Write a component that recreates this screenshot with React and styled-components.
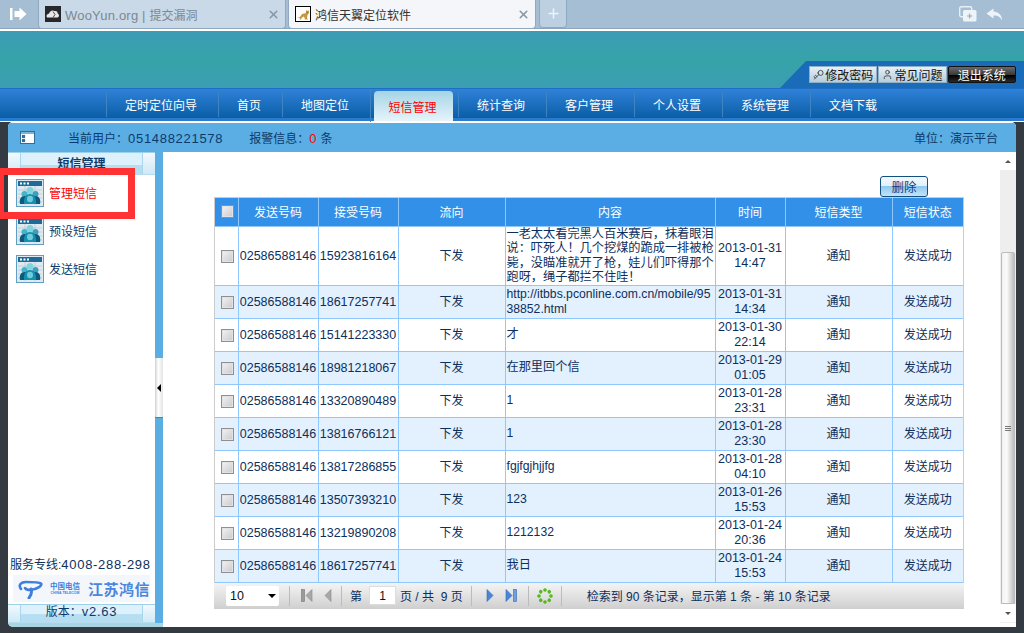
import React from 'react'
import styled, { createGlobalStyle } from 'styled-components'
import { Key, User, X, Plus } from 'lucide-react'

const GlobalStyle = createGlobalStyle`
  html, body { margin: 0; padding: 0; height: 100%; overflow: hidden; }
  #root { height: 100%; }
  * { box-sizing: border-box; }
  body { font-family: "Liberation Sans", "Noto Sans CJK SC", sans-serif; font-size: 12px; color: #0d2f5c; }
`

const Page = styled.div`
  position: relative;
  display: flex;
  flex-direction: column;
  height: 633px;
  width: 1024px;
  background: #fff;
`

/* browser chrome */
const TabBar = styled.div`
  display: flex;
  align-items: stretch;
  height: 29px;
  flex: none;
  padding-right: 21px;
  background: #a5bed3;
  border-bottom: 1px solid #8aa5bd;
`
const BackBtn = styled.div`
  width: 38px;
  display: flex;
  align-items: center;
  padding-left: 10px;
`
const Tab = styled.div`
  width: 248px;
  margin-right: 2px;
  margin-bottom: -1px;
  display: flex;
  align-items: center;
  padding: 0 5px 0 6px;
  gap: 4px;
  font-size: 12px;
  color: ${p => (p.$active ? '#333' : '#7b8894')};
  background: ${p => (p.$active ? '#f4f6f9' : '#c9d9e7')};
  border: 1px solid #8fa9c0;
  border-top: none;
  border-radius: 0 0 4px 4px;
`
const TabTitle = styled.span`
  flex: 1;
  white-space: nowrap;
`
const TabLatin = styled.span`
  font-size: 13px;
  letter-spacing: 0.2px;
`
const NewTab = styled.div`
  width: 28px;
  margin-left: 1px;
  display: flex;
  align-items: center;
  justify-content: center;
  background: #bcd0e1;
  border: 1px solid #8fa9c0;
  border-top: none;
  border-radius: 0 0 4px 4px;
  color: #eef3f7;
`
const ChromeTools = styled.div`
  margin-left: auto;
  display: flex;
  align-items: center;
  gap: 9px;
`
const WhiteLine = styled.div`
  height: 2px;
  flex: none;
  background: #fff;
`

/* banner */
const Banner = styled.div`
  height: 57px;
  flex: none;
  display: flex;
  justify-content: flex-end;
  align-items: flex-end;
  background: linear-gradient(180deg, #3c9bb5 0%, #36a3a8 50%, #3b9db3 100%);
`
const UserBar = styled.div`
  width: 244px;
  height: 27px;
  padding: 5px 8px 0 29px;
  display: flex;
  align-items: flex-start;
  gap: 1px;
  background: #1a6cb8;
  clip-path: polygon(26px 0, 100% 0, 100% 100%, 0 100%);
`
const UserBtn = styled.div`
  height: 17px;
  flex: 1;
  display: flex;
  align-items: center;
  justify-content: center;
  gap: 1px;
  font-size: 12px;
  color: ${p => (p.$dark ? '#fff' : '#111')};
  background: ${p =>
    p.$dark
      ? 'linear-gradient(180deg, #6a6a6a 0%, #3a3a3a 50%, #000 55%, #2a2a2a 100%)'
      : 'linear-gradient(180deg, #e6f0f6 0%, #b4cddd 100%)'};
  border: 1px solid ${p => (p.$dark ? '#111' : '#8fb0c8')};
  border-radius: ${p => (p.$dark ? '2px' : '0')};
`
const KeyIcon = styled(Key)`
  transform: rotate(180deg);
`

/* main nav */
const Nav = styled.div`
  height: 34px;
  flex: none;
  display: flex;
  padding-left: 106px;
  background: linear-gradient(180deg, #2f82d8 0%, #0a5ea6 88%, #2a7bd0 89%, #2a7bd0 97%, #fff 97%);
  border-top: 1px solid #1e6fc4;
`
const NavItem = styled.div`
  width: ${p => p.$w}px;
  height: 25px;
  margin-top: 3px;
  padding-right: 3px;
  display: flex;
  align-items: center;
  justify-content: center;
  color: #fff;
  font-size: 12px;
  border-left: 1px solid #3f84c2;
`
const NavActive = styled.div`
  width: 88px;
  padding: 2px 5px 0 3px;
  display: flex;
  border-left: 1px solid #3f84c2;
`
const NavActiveInner = styled.div`
  flex: 1;
  height: 30px;
  padding-right: 2px;
  display: flex;
  align-items: center;
  justify-content: center;
  color: #f00;
  font-size: 12px;
  border-radius: 4px 4px 0 0;
  background: linear-gradient(180deg, #a5d4e6 0%, #e6f4fa 100%);
`

/* workspace */
const Workspace = styled.div`
  flex: 1;
  min-height: 0;
  display: flex;
  padding: 0 8px 6px;
  background: #343a42;
`
const Panel = styled.div`
  flex: 1;
  display: flex;
  flex-direction: column;
  border-radius: 5px 5px 0 5px;
  overflow: hidden;
  background: #fff;
`
const InfoBar = styled.div`
  height: 30px;
  flex: none;
  display: flex;
  align-items: center;
  padding: 0 18px 0 12px;
  background: #5aaee3;
  border-top: 1px solid #fff;
  color: #0d3a6b;
  font-size: 12px;
`
const InfoText = styled.span`
  margin-left: ${p => p.$ml || 0}px;
  white-space: nowrap;
`
const InfoRight = styled(InfoText)`
  margin-left: auto;
`
const Digits = styled.span`
  font-size: 13px;
  letter-spacing: 0.7px;
`
const Red = styled(Digits)`
  color: #f00;
`
const Body = styled.div`
  flex: 1;
  min-height: 0;
  display: flex;
`
const BottomStrip = styled.div`
  height: 4px;
  width: 155px;
  flex: none;
  background: #aad5e3;
`

/* sidebar */
const Sidebar = styled.div`
  width: 147px;
  flex: none;
  display: flex;
  flex-direction: column;
`
const BarRow = styled.div`
  height: ${p => p.$h}px;
  flex: none;
  display: flex;
  border-top: 1px solid #9fd0ea;
  border-bottom: 1px solid #b5dcef;
`
const BarCap = styled.div`
  width: 12px;
  flex: none;
  background: linear-gradient(180deg, #f2f9fd 0%, #cfe9f6 100%);
`
const BarMid = styled.div`
  flex: 1;
  display: flex;
  justify-content: center;
  align-items: baseline;
  white-space: nowrap;
  padding-top: ${p => p.$pt || 0}px;
  font-size: 12px;
  line-height: 14px;
  font-weight: ${p => (p.$bold ? 700 : 400)};
  color: #0d3a6b;
  border-left: 1px solid #a9d6ec;
  border-right: 1px solid #a9d6ec;
  background: linear-gradient(180deg, #dcf1fb 0%, #dcf1fb 55%, #b5def1 56%, #b5def1 100%);
`
const Menu = styled.div`
  flex: 1;
  padding: 4px 0 0 8px;
`
const MenuItem = styled.div`
  height: 38px;
  display: flex;
  gap: 5px;
  align-items: flex-start;
`
const MenuLabel = styled.span`
  margin-top: 5px;
  font-size: 12px;
  color: ${p => (p.$active ? '#f00' : '#0d3a6b')};
`
const Hotline = styled.div`
  padding-left: 2px;
  font-size: 12px;
  line-height: 14px;
  white-space: nowrap;
  color: #0d2f5c;
`
const LogoBox = styled.div`
  margin: 3px 5px 2px;
  height: 27px;
  display: flex;
  align-items: center;
  padding-left: 4px;
  background: #f3f7fc;
`
const LogoCn = styled.div`
  width: 30px;
  margin: 0 8px 0 7px;
  flex: none;
  display: flex;
  flex-direction: column;
  align-items: center;
  white-space: nowrap;
  font-family: "Noto Sans CJK SC", sans-serif;
  font-weight: 700;
  font-size: 7.5px;
  line-height: 10px;
  color: #3f7fdc;
`
const LogoEn = styled.span`
  font-family: "Liberation Sans", sans-serif;
  font-size: 3.5px;
  line-height: 5px;
`
const LogoName = styled.span`
  font-family: "Noto Sans CJK SC", sans-serif;
  font-weight: 700;
  font-size: 15px;
  letter-spacing: 0.5px;
  white-space: nowrap;
  color: #4a86dd;
`

/* splitter */
const Splitter = styled.div`
  width: 8px;
  flex: none;
  display: flex;
  align-items: flex-start;
  padding-top: 206px;
  background: #5aaee3;
`
const SplitHandle = styled.div`
  width: 8px;
  height: 60px;
  display: flex;
  align-items: center;
  justify-content: center;
  background: linear-gradient(90deg, #d0d0d0 0%, #fff 40%, #e4e4e4 100%);
  border-bottom: 1px solid #777;
`
const SplitArrow = styled.div`
  width: 0;
  height: 0;
  border-style: solid;
  border-width: 4px 4px 4px 0;
  border-color: transparent #000 transparent transparent;
`

/* content */
const Content = styled.div`
  flex: 1;
  min-width: 0;
  padding: 24px 0 0 51px;
`
const DeleteRow = styled.div`
  width: 750px;
  display: flex;
  justify-content: flex-end;
  padding-right: 36px;
`
const DeleteBtn = styled.button`
  width: 48px;
  height: 21px;
  padding: 0;
  font-family: inherit;
  font-size: 12.5px;
  color: #0b3c8c;
  border: 1px solid #14507f;
  border-radius: 3px;
  background: linear-gradient(180deg, #f1f8fc 0%, #e2f0f9 48%, #8fc8ee 50%, #c5e4f7 100%);
`
const TableWrap = styled.div`
  width: 750px;
  border: 1px solid #ccc;
  border-bottom: none;
`
const Table = styled.table`
  width: 748px;
  table-layout: fixed;
  border-collapse: collapse;
`
const Th = styled.th`
  height: 28px;
  padding: 0;
  font-weight: 400;
  font-size: 12px;
  color: #fff;
  background: #3390e8;
  border: 1px solid #8fc7ff;
  border-top: none;
  &:first-child { border-left: none; }
  &:last-child { border-right: none; }
`
const Tr = styled.tr`
  background: ${p => (p.$alt ? '#e3f0fd' : '#fff')};
`
const Td = styled.td`
  height: ${p => p.$h || 33}px;
  padding: 1px 0 0;
  text-align: center;
  font-size: 12.5px;
  line-height: 15px;
  color: #0d2f5c;
  border: 1px solid #8fc7ff;
  &:first-child { border-left: none; }
  &:last-child { border-right: none; }
`
const TextTd = styled(Td)`
  padding: 0 0 0 1px;
  text-align: left;
  font-size: 12.2px;
  line-height: ${p => (p.$tight ? 14.5 : 15)}px;
  word-break: break-all;
`
const Cjk = styled.span`
  font-size: 12px;
`
const CheckBox = styled.div`
  width: 13px;
  height: 13px;
  margin-left: 6px;
  border: 1px solid #909090;
  box-shadow: inset 0 0 0 1px #e2e2e2;
  background: linear-gradient(135deg, #f4f4f4 0%, #c8c8d0 100%);
`

/* pager */
const Pager = styled.div`
  width: 750px;
  height: 26px;
  display: flex;
  align-items: center;
  padding-left: 12px;
  font-size: 12px;
  color: #0d2f5c;
  background: linear-gradient(180deg, #f4f4f4 0%, #cfcfcf 100%);
`
const PageSelect = styled.div`
  width: 53px;
  height: 20px;
  display: flex;
  align-items: center;
  justify-content: space-between;
  padding: 0 1px 0 4px;
  margin-right: 10px;
  font-size: 12.5px;
  color: #111;
  background: #fff;
  border-radius: 2px;
`
const SelectArrow = styled.span`
  width: 0;
  height: 0;
  margin-right: 2px;
  border-style: solid;
  border-width: 4px 4px 0;
  border-color: #000 transparent transparent;
`
const PagerSep = styled.span`
  width: 1px;
  height: 20px;
  flex: none;
  margin: ${p => p.$m || '0 9px'};
  background: #f8f8f8;
  border-left: 1px solid #bbb;
`
const PagerIcon = styled.span`
  display: flex;
  margin-right: ${p => p.$mr || 0}px;
`
const PageInput = styled.div`
  width: 27px;
  height: 19px;
  margin: 0 4px 0 7px;
  display: flex;
  align-items: center;
  justify-content: center;
  color: #111;
  background: #fff;
  border: 1px solid #ddd;
`
const PagerText = styled.span`
  white-space: nowrap;
  margin-left: ${p => p.$ml || 0}px;
`

/* scrollbar */
const ScrollTrack = styled.div`
  width: 16px;
  flex: none;
  display: flex;
  flex-direction: column;
  background: #eee;
`
const ScrollBtn = styled.div`
  height: ${p => p.$h}px;
  flex: none;
  display: flex;
  align-items: center;
  justify-content: center;
  background: #fff;
`
const ScrollArrow = styled.span`
  width: 0;
  height: 0;
  border-style: solid;
  border-color: #555 transparent;
  border-width: ${p => (p.$up ? '0 3px 3px' : '3px 3px 0')};
`
const ScrollGap = styled.div`
  height: 82px;
  flex: none;
`
const ScrollThumb = styled.div`
  height: 352px;
  flex: none;
  margin: 0 1px;
  display: flex;
  flex-direction: column;
  align-items: center;
  justify-content: center;
  gap: 1px;
  border: 1px solid #bbb;
  border-radius: 2px 2px 0 0;
  background: linear-gradient(90deg, #f2f2f2 0%, #fafafa 40%, #bdbdbd 100%);
`
const Grip = styled.i`
  width: 6px;
  height: 1px;
  background: #777;
`

/* annotation drawn on the screenshot */
const RedMark = styled.div`
  position: absolute;
  left: 0;
  top: 168px;
  width: 135px;
  height: 51px;
  border: 7px solid #ff3333;
  border-left-width: 4px;
`

const TableIcon = () => (
  <svg width="28" height="28" viewBox="0 0 28 28" style={{ flex: 'none' }}>
    <rect x="0.5" y="0.5" width="27" height="27" fill="#dfe9f0" stroke="#5f9fc6" />
    <rect x="2" y="2" width="24" height="5" fill="#1f6a98" />
    <rect x="4" y="3.5" width="2" height="2" fill="#fff" />
    <rect x="7.5" y="3.5" width="2" height="2" fill="#fff" />
    <rect x="11" y="3.5" width="2" height="2" fill="#fff" />
    <path d="M2 11h24M2 15h24M2 19h24M2 23h24M9 7v19M19 7v19" stroke="#b4c8d6" strokeWidth="0.7" />
    <circle cx="8.500" cy="15" r="3" fill="#46b4c8" />
    <circle cx="19.500" cy="15" r="3" fill="#3aa0bc" />
    <circle cx="14" cy="11.500" r="3.500" fill="#7fd4e0" />
    <path d="M4 25c-1-5 1-8 4.500-8S13 20 13 25z" fill="#0e5a7c" />
    <path d="M15 25c0-5 1-8 4.500-8s5.500 3 4.500 8z" fill="#0e5a7c" />
    <path d="M8 25c-.5-7 2-10 6-10s6.500 3 6 10z" fill="#1590ae" />
    <ellipse cx="14" cy="20" rx="3" ry="3.200" fill="#8fe0ea" opacity="0.75" />
  </svg>
)

const BackIcon = () => (
  <svg width="17" height="14" viewBox="0 0 17 14">
    <rect x="0" y="1" width="2.5" height="12" fill="#fff" />
    <path d="M4.5 4h5V0.5L16.5 7l-7 6.5V10h-5z" fill="#fff" />
  </svg>
)

const WindowIcon = () => (
  <svg width="18" height="16" viewBox="0 0 18 16">
    <rect x="0.7" y="0.7" width="12" height="10" rx="1.5" fill="none" stroke="#e8eff5" strokeWidth="1.4" />
    <rect x="4" y="4" width="13.5" height="11.5" rx="1.5" fill="#eef3f7" />
    <path d="M10.7 7.5v5M8.2 10h5" stroke="#8fa5b8" strokeWidth="1" />
  </svg>
)

const ReplyIcon = () => (
  <svg width="17" height="13" viewBox="0 0 17 13">
    <path d="M7.5 0.5L0.5 5.5l7 5V7.5c4 0 6.5 1 8.5 5 0-5-3-8.5-8.5-9z" fill="#eef3f7" />
  </svg>
)

const CloudFav = () => (
  <svg width="16" height="16" viewBox="0 0 16 16" style={{ flex: 'none' }}>
    <rect width="16" height="16" fill="#26282c" />
    <path d="M2 11.500c-1.200-2 .2-3.800 2-3.800C4.500 5 7.500 3.500 9.500 5c2-.5 3.500 1 3.200 2.700 1.500.3 2 3-.2 3.800z" fill="#e8e8e8" />
    <path d="M8 5.500l2 3-2 3" fill="none" stroke="#26282c" strokeWidth="0.8" />
  </svg>
)

const CatFav = () => (
  <svg width="16" height="16" viewBox="0 0 16 16" style={{ flex: 'none' }}>
    <rect x="0.5" y="0.5" width="15" height="15" fill="#fff" stroke="#000" />
    <path d="M2 12l3-1 2-3 4-1 .5-3 1 1 1-1 .5 3-1.500 2-.5 3 1 1.500H10l-1-3-2 1-1 2H4.500l.5-1.500z" fill="#c9953f" />
    <circle cx="12" cy="6" r="0.6" fill="#333" />
  </svg>
)

const TelecomMark = () => (
  <svg width="26" height="20" viewBox="0 0 26 20" style={{ flex: 'none' }}>
    <path
      d="M4 10C1 6 4 3 9 3c6 0 13 0 15 1.500 1.500 1.500-3 6-11 6.500-2 0-4-.5-5-2"
      fill="none"
      stroke="#3f7fdc"
      strokeWidth="2.600"
      strokeLinecap="round"
    />
    <path d="M14 10c1 3 .5 6-2 9" fill="none" stroke="#3f7fdc" strokeWidth="3" strokeLinecap="round" />
  </svg>
)

const FirstIcon = () => (
  <svg width="12" height="13" viewBox="0 0 12 13">
    <rect x="0.5" y="0.5" width="3" height="12" fill="#9a9a9a" stroke="#777" strokeWidth="0.6" />
    <path d="M11 0.500v12L5 6.500z" fill="#a8a8a8" stroke="#888" strokeWidth="0.6" />
  </svg>
)
const PrevIcon = () => (
  <svg width="8" height="13" viewBox="0 0 8 13">
    <path d="M7 0.500v12L1 6.500z" fill="#a8a8a8" stroke="#888" strokeWidth="0.6" />
  </svg>
)
const NextIcon = () => (
  <svg width="8" height="13" viewBox="0 0 8 13">
    <path d="M1 0.500v12L7 6.500z" fill="#4a86d8" stroke="#3468b0" strokeWidth="0.6" />
  </svg>
)
const LastIcon = () => (
  <svg width="12" height="13" viewBox="0 0 12 13">
    <path d="M1 0.500v12L7 6.500z" fill="#4a86d8" stroke="#3468b0" strokeWidth="0.6" />
    <rect x="8.500" y="0.500" width="3" height="12" fill="#6f9fe0" stroke="#3468b0" strokeWidth="0.6" />
  </svg>
)
const RefreshIcon = () => (
  <svg width="16" height="16" viewBox="0 0 16 16">
    {[0, 45, 90, 135, 180, 225, 270, 315].map(a => (
      <circle key={a} cx="8" cy="2" r="1.800" fill="#55b81e" transform={`rotate(${a} 8 8)`} />
    ))}
  </svg>
)

const navItems = [
  { t: '定时定位向导', w: 112 },
  { t: '首页', w: 64 },
  { t: '地图定位', w: 88 },
  { t: '短信管理', w: 88, active: true },
  { t: '统计查询', w: 88 },
  { t: '客户管理', w: 88 },
  { t: '个人设置', w: 88 },
  { t: '系统管理', w: 88 },
  { t: '文档下载', w: 88 },
]

const columns = [23, 80, 80, 107, 210, 70, 107, 71]
const heads = ['发送号码', '接受号码', '流向', '内容', '时间', '短信类型', '短信状态']

const rows = [
  { to: '15923816164', text: '一老太太看完黑人百米赛后，抹着眼泪说：吓死人！几个挖煤的跪成一排被枪毙，没瞄准就开了枪，娃儿们吓得那个跑呀，绳子都拦不住哇！', d: '2013-01-31', t: '14:47', h: 59 },
  { to: '18617257741', text: 'http://itbbs.pconline.com.cn/mobile/9538852.html', d: '2013-01-31', t: '14:34' },
  { to: '15141223330', text: '才', d: '2013-01-30', t: '22:14' },
  { to: '18981218067', text: '在那里回个信', d: '2013-01-29', t: '01:05' },
  { to: '13320890489', text: '1', d: '2013-01-28', t: '23:31' },
  { to: '13816766121', text: '1', d: '2013-01-28', t: '23:30' },
  { to: '13817286855', text: 'fgjfgjhjjfg', d: '2013-01-28', t: '04:10' },
  { to: '13507393210', text: '123', d: '2013-01-26', t: '15:53' },
  { to: '13219890208', text: '1212132', d: '2013-01-24', t: '20:36' },
  { to: '18617257741', text: '我日', d: '2013-01-24', t: '15:53' },
]

const menu = ['管理短信', '预设短信', '发送短信']

const App = () => {
  return (
    <Page>
      <GlobalStyle />
      <TabBar>
        <BackBtn><BackIcon /></BackBtn>
        <Tab>
          <CloudFav />
          <TabTitle><TabLatin>WooYun.org | </TabLatin>提交漏洞</TabTitle>
          <X size={13} strokeWidth={3} color="#8a98a6" />
        </Tab>
        <Tab $active>
          <CatFav />
          <TabTitle>鸿信天翼定位软件</TabTitle>
          <X size={13} strokeWidth={3} color="#8a98a6" />
        </Tab>
        <NewTab><Plus size={15} strokeWidth={2.5} /></NewTab>
        <ChromeTools>
          <WindowIcon />
          <ReplyIcon />
        </ChromeTools>
      </TabBar>
      <WhiteLine />
      <Banner>
        <UserBar>
          <UserBtn><KeyIcon size={11} color="#444" />修改密码</UserBtn>
          <UserBtn><User size={11} color="#444" />常见问题</UserBtn>
          <UserBtn $dark>退出系统</UserBtn>
        </UserBar>
      </Banner>
      <Nav>
        {navItems.map(n =>
          n.active ? (
            <NavActive key={n.t}><NavActiveInner>{n.t}</NavActiveInner></NavActive>
          ) : (
            <NavItem key={n.t} $w={n.w}>{n.t}</NavItem>
          )
        )}
      </Nav>
      <Workspace>
        <Panel>
          <InfoBar>
            <svg width="15" height="13" viewBox="0 0 15 13" style={{ flex: 'none' }}>
              <rect x="0.5" y="0.5" width="14" height="12" fill="#e8f3fa" stroke="#2f6f99" />
              <rect x="1" y="1" width="13" height="2" fill="#7fb2d2" />
              <rect x="2" y="4" width="3" height="3" fill="#2f6f99" />
              <rect x="2" y="8" width="3" height="3" fill="#2f6f99" />
              <rect x="6" y="3" width="8" height="9" fill="#fff" />
            </svg>
            <InfoText $ml={33}>当前用户：<Digits>051488221578</Digits></InfoText>
            <InfoText $ml={26}>报警信息：<Red>0</Red> 条</InfoText>
            <InfoRight>单位：演示平台</InfoRight>
          </InfoBar>
          <Body>
            <Sidebar>
              <BarRow $h={23}>
                <BarCap />
                <BarMid $bold $pt={4}>短信管理</BarMid>
                <BarCap />
              </BarRow>
              <Menu>
                {menu.map((m, i) => (
                  <MenuItem key={m}>
                    <TableIcon />
                    <MenuLabel $active={i === 0}>{m}</MenuLabel>
                  </MenuItem>
                ))}
              </Menu>
              <Hotline>服务专线:<Digits>4008-288-298</Digits></Hotline>
              <LogoBox>
                <TelecomMark />
                <LogoCn>
                  中国电信
                  <LogoEn>CHINA TELECOM</LogoEn>
                </LogoCn>
                <LogoName>江苏鸿信</LogoName>
              </LogoBox>
              <BarRow $h={19}>
                <BarCap />
                <BarMid>版本：<Digits>v2.63</Digits></BarMid>
                <BarCap />
              </BarRow>
            </Sidebar>
            <Splitter>
              <SplitHandle><SplitArrow /></SplitHandle>
            </Splitter>
            <Content>
              <DeleteRow><DeleteBtn>删除</DeleteBtn></DeleteRow>
              <TableWrap>
                <Table>
                  <colgroup>
                    {columns.map((w, i) => <col key={i} width={w} />)}
                  </colgroup>
                  <thead>
                    <tr>
                      <Th><CheckBox /></Th>
                      {heads.map(h => <Th key={h}>{h}</Th>)}
                    </tr>
                  </thead>
                  <tbody>
                    {rows.map((r, i) => (
                      <Tr key={i} $alt={i % 2 === 1}>
                        <Td $h={r.h}><CheckBox /></Td>
                        <Td>02586588146</Td>
                        <Td>{r.to}</Td>
                        <Td><Cjk>下发</Cjk></Td>
                        <TextTd $tight={i === 0}>{r.text}</TextTd>
                        <Td>{r.d}<br />{r.t}</Td>
                        <Td><Cjk>通知</Cjk></Td>
                        <Td><Cjk>发送成功</Cjk></Td>
                      </Tr>
                    ))}
                  </tbody>
                </Table>
              </TableWrap>
              <Pager>
                <PageSelect>10<SelectArrow /></PageSelect>
                <PagerSep $m="0 11px 0 0" />
                <PagerIcon $mr={11}><FirstIcon /></PagerIcon>
                <PagerIcon><PrevIcon /></PagerIcon>
                <PagerSep $m="0 8px 0 9px" />
                <PagerText>第</PagerText>
                <PageInput>1</PageInput>
                <PagerText>页 / 共 &nbsp;9 页</PagerText>
                <PagerSep $m="0 14px 0 8px" />
                <PagerIcon $mr={11}><NextIcon /></PagerIcon>
                <PagerIcon><LastIcon /></PagerIcon>
                <PagerSep $m="0 8px 0 11px" />
                <RefreshIcon />
                <PagerSep $m="0 0 0 8px" />
                <PagerText $ml={25}>检索到 90 条记录，显示第 1 条 - 第 10 条记录</PagerText>
              </Pager>
            </Content>
            <ScrollTrack>
              <ScrollBtn $h={18}><ScrollArrow $up /></ScrollBtn>
              <ScrollGap />
              <ScrollThumb><Grip /><Grip /><Grip /></ScrollThumb>
              <ScrollBtn $h={18}><ScrollArrow /></ScrollBtn>
            </ScrollTrack>
          </Body>
          <BottomStrip />
        </Panel>
      </Workspace>
      <RedMark />
    </Page>
  )
}

export default App
